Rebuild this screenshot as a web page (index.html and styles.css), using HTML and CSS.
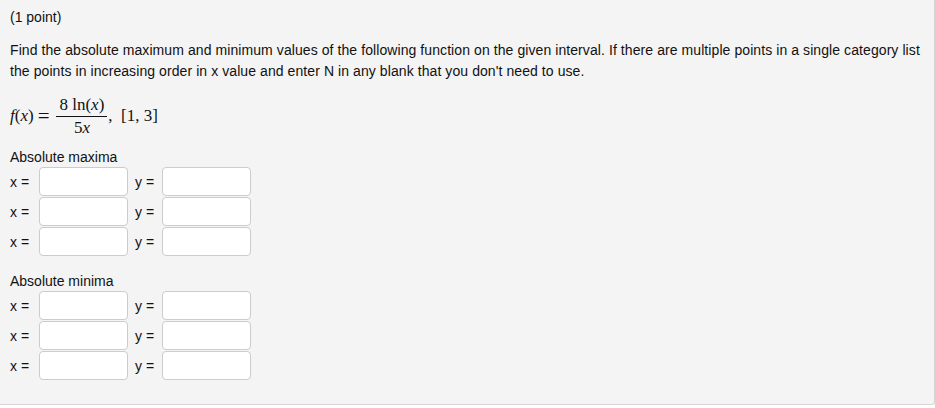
FILE: index.html
```html
<!DOCTYPE html>
<html>
<head>
<meta charset="utf-8">
<link rel="stylesheet" href="styles.css">
</head>
<body>
<div class="panel">
  <div class="points">(1 point)</div>
  <p class="prompt">Find the absolute maximum and minimum values of the following function on the given interval. If there are multiple points in a single category list the points in increasing order in x value and enter N in any blank that you don't need to use.</p>
  <div class="formula">
    <span class="it">f</span><span>(</span><span class="it">x</span><span>)</span><span class="eq">=</span>
    <span class="frac"><span class="num">8 ln(<span class="it">x</span>)</span><span class="den">5<span class="it">x</span></span></span>
    <span class="tail">,&nbsp; [1, 3]</span>
  </div>
  <div class="section-title">Absolute maxima</div>
  <div class="rows">
    <div class="row"><span class="lbl">x =</span><span class="box"></span><span class="lbl lbl-y">y =</span><span class="box"></span></div>
    <div class="row"><span class="lbl">x =</span><span class="box"></span><span class="lbl lbl-y">y =</span><span class="box"></span></div>
    <div class="row"><span class="lbl">x =</span><span class="box"></span><span class="lbl lbl-y">y =</span><span class="box"></span></div>
  </div>
  <div class="section-title second">Absolute minima</div>
  <div class="rows">
    <div class="row"><span class="lbl">x =</span><span class="box"></span><span class="lbl lbl-y">y =</span><span class="box"></span></div>
    <div class="row"><span class="lbl">x =</span><span class="box"></span><span class="lbl lbl-y">y =</span><span class="box"></span></div>
    <div class="row"><span class="lbl">x =</span><span class="box"></span><span class="lbl lbl-y">y =</span><span class="box"></span></div>
  </div>
</div>
</body>
</html>
```
FILE: styles.css
```css
html, body {
  margin: 0;
  padding: 0;
  background: #ffffff;
}
.panel {
  box-sizing: border-box;
  width: 935px;
  height: 405px;
  background: #f4f4f4;
  border-right: 1px solid #d6d6d6;
  border-bottom: 1px solid #d6d6d6;
  border-radius: 0 0 3px 0;
  padding: 9px 10px 0 10px;
  font-family: "Liberation Sans", Arial, sans-serif;
  font-size: 14px;
  color: #111;
}
.points {
  line-height: 16px;
}
.prompt {
  margin: 15px 0 0 0;
  line-height: 21px;
  letter-spacing: 0.08px;
}
.formula {
  display: flex;
  align-items: center;
  margin-top: 13px;
  height: 42px;
  font-family: "Liberation Serif", "Times New Roman", serif;
  font-size: 17px;
  color: #111;
}
.it { font-style: italic; }
.eq {
  font-size: 21px;
  line-height: 20px;
  margin: 0 6px 0 4px;
}
.frac {
  display: inline-flex;
  flex-direction: column;
  align-items: center;
  padding: 0 1px;
}
.num {
  border-bottom: 1px solid #111;
  padding: 0 3px 2px 3px;
  line-height: 19px;
}
.den {
  line-height: 20px;
  padding-top: 1px;
}
.tail { margin-left: 0; }
.section-title {
  margin-top: 12px;
  line-height: 16px;
}
.section-title.second {
  margin-top: 17px;
}
.rows {
  display: flex;
  flex-direction: column;
  gap: 1px;
  margin-top: 2px;
}
.row {
  display: flex;
  align-items: center;
  height: 29px;
}
.lbl {
  width: 29px;
  line-height: 16px;
}
.lbl-y {
  width: 27px;
  margin-left: 7px;
}
.box {
  box-sizing: border-box;
  width: 89px;
  height: 29px;
  background: #ffffff;
  border: 1px solid #cccccc;
  border-radius: 4px;
}
```
